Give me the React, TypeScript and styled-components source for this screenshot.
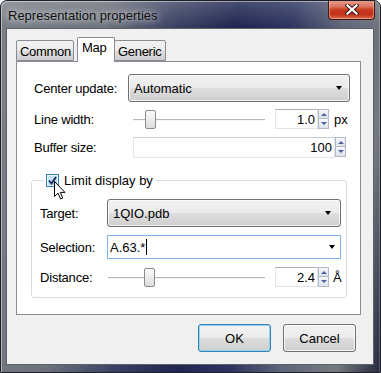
import React from "react";
import styled, { createGlobalStyle } from "styled-components";

const GlobalStyle = createGlobalStyle`
    html, body {
        margin: 0;
        padding: 0;
        background: #ffffff;
    }
    body {
        font-family: "Liberation Sans", Arial, sans-serif;
        font-size: 13px;
        color: #000;
    }
    * {
        box-sizing: border-box;
    }
`;

const Window = styled.div`
    width: 381px;
    height: 373px;
    display: flex;
    flex-direction: column;
    padding: 0 6px 7px 5px;
    border: 1px solid #1d2027;
    border-radius: 7px 7px 0 0;
    overflow: hidden;
    background:
        linear-gradient(180deg, rgba(255, 255, 255, 0.18) 0, rgba(255, 255, 255, 0) 26px),
        linear-gradient(100deg, #7b7f88 0%, #6b707b 25%, #3b4163 40%, #1f2650 54%, #2c345f 66%, #60667a 78%, #75797f 90%, #262b40 100%);
    box-shadow: inset 1px 1px 0 rgba(255, 255, 255, 0.45), inset -1px 0 0 rgba(255, 255, 255, 0.2);
`;

const TitleBar = styled.div`
    height: 27px;
    flex: none;
    display: flex;
    justify-content: space-between;
    align-items: center;
`;

const Title = styled.span`
    padding-left: 2px;
    padding-top: 1px;
    font-size: 13px;
    color: #101010;
    text-shadow: 0 0 6px rgba(255, 255, 255, 0.75), 0 0 10px rgba(255, 255, 255, 0.5);
`;

const CloseButton = styled.div`
    align-self: flex-start;
    width: 47px;
    height: 20px;
    margin-top: -1px;
    margin-right: -1px;
    display: flex;
    align-items: center;
    justify-content: center;
    border: 1px solid #3e1912;
    border-top: none;
    border-radius: 0 0 4px 4px;
    background: linear-gradient(180deg, #e9a393 0%, #d9735d 35%, #c8391f 52%, #c23019 75%, #dd6a4c 100%);
    box-shadow: inset 0 0 0 1px rgba(255, 210, 200, 0.45);
`;

const Client = styled.div`
    flex: 1;
    display: flex;
    flex-direction: column;
    padding: 8px 12px 0 9px;
    background: #f0f0f0;
    border: 1px solid #5c6068;
`;

const TabBar = styled.div`
    height: 25px;
    margin-bottom: -1px;
    display: flex;
    align-items: flex-end;
    position: relative;
    z-index: 1;
`;

const Tab = styled.div<{ $active?: boolean; $w: number }>`
    width: ${p => p.$w}px;
    height: ${p => (p.$active ? 25 : 21)}px;
    margin-bottom: ${p => (p.$active ? 0 : 1)}px;
    margin-left: ${p => (p.$active ? 3 : -1)}px;
    padding: ${p => (p.$active ? "2px 0 0 4px" : "3px 0 0 3px")};
    border: 1px solid #898c95;
    border-bottom: ${p => (p.$active ? "none" : "1px solid #898c95")};
    border-radius: 2px 2px 0 0;
    background: ${p => (p.$active ? "#ffffff" : "linear-gradient(180deg, #f2f2f2 0%, #ebebeb 50%, #dddddd 51%, #cfcfcf 100%)")};
    line-height: 16px;
    letter-spacing: -0.3px;
    white-space: nowrap;

    &:first-child {
        margin-left: 0;
    }
`;

const Pane = styled.div`
    height: 254px;
    padding: 12px 10px 0 17px;
    background: #ffffff;
    border: 1px solid #898c95;
    display: flex;
    flex-direction: column;
`;

const Row = styled.div<{ $h: number; $top?: number; $pr?: number }>`
    height: ${p => p.$h}px;
    margin-top: ${p => p.$top || 0}px;
    padding-right: ${p => p.$pr || 0}px;
    display: flex;
    align-items: center;
    flex: none;
`;

const Label = styled.span<{ $w: number }>`
    width: ${p => p.$w}px;
    flex: none;
    letter-spacing: -0.2px;
`;

const Combo = styled.div<{ $pr?: number }>`
    flex: 1;
    height: 100%;
    display: flex;
    align-items: center;
    justify-content: space-between;
    padding: 0 ${p => p.$pr || 7}px 0 5px;
    border: 1px solid #707070;
    border-radius: 3px;
    background: linear-gradient(180deg, #f2f2f2 0%, #ebebeb 48%, #dddddd 52%, #cfcfcf 100%);
    box-shadow: inset 0 0 0 1px rgba(255, 255, 255, 0.7);
`;

const EditCombo = styled.div`
    flex: 1;
    height: 100%;
    display: flex;
    align-items: center;
    padding: 0 5px 0 2px;
    border: 1px solid #7eb4ea;
    background: #ffffff;
`;

const Caret = styled.span`
    width: 1px;
    height: 16px;
    background: #000;
    margin-left: 1px;
`;

const Arrow = styled.span`
    margin-left: auto;
    width: 0;
    height: 0;
    border-left: 3.5px solid transparent;
    border-right: 3.5px solid transparent;
    border-top: 4px solid #000;
`;

const SliderTrack = styled.div<{ $w: number; $ml?: number }>`
    width: ${p => p.$w}px;
    margin-left: ${p => p.$ml || 0}px;
    height: 100%;
    position: relative;
    flex: none;

    &::before {
        content: "";
        position: absolute;
        left: 0;
        right: 0;
        top: 50%;
        height: 1px;
        background: #b8b8b8;
        box-shadow: 0 1px 0 #f4f4f4;
    }
`;

const Handle = styled.div<{ $pos: number }>`
    position: absolute;
    left: ${p => p.$pos}px;
    top: 50%;
    margin-top: -9px;
    width: 11px;
    height: 19px;
    border: 1px solid #8b8b8b;
    border-radius: 2px;
    background: linear-gradient(180deg, #fafafa 0%, #ececec 50%, #dcdcdc 100%);
`;

const SpinBox = styled.div<{ $w?: number }>`
    ${p => (p.$w ? `width: ${p.$w}px; flex: none;` : "flex: 1;")}
    height: 100%;
    display: flex;
    margin-left: ${p => (p.$w ? 10 : 0)}px;
`;

const SpinField = styled.div<{ $light?: boolean }>`
    flex: 1;
    height: 100%;
    display: flex;
    align-items: center;
    justify-content: flex-end;
    padding-right: 2px;
    background: #fff;
    border: 1px solid ${p => (p.$light ? "#e3e6ec" : "#e2e3ea")};
    border-top-color: ${p => (p.$light ? "#c9ccd3" : "#abadb3")};
`;

const SpinArrows = styled.div`
    width: 11px;
    height: 20px;
    display: flex;
    flex-direction: column;
    flex: none;
`;

const SpinArrowButton = styled.div<{ $down?: boolean }>`
    height: 10px;
    display: flex;
    align-items: center;
    justify-content: center;
    border: 1px solid #b3bac6;
    ${p => (p.$down ? "border-top: none;" : "")}
    background: linear-gradient(180deg, #f5f7fa 0%, #dde3ec 100%);

    &::after {
        content: "";
        width: 0;
        height: 0;
        border-left: 3px solid transparent;
        border-right: 3px solid transparent;
        ${p => (p.$down ? "border-top: 3px solid #4b63a0;" : "border-bottom: 3px solid #4b63a0;")}
    }
`;

const Unit = styled.span<{ $ml: number }>`
    margin-left: ${p => p.$ml}px;
`;

const Group = styled.fieldset`
    margin: 15px 3px 0 -3px;
    padding: 11px 5px 10px 8px;
    border: 1px solid #d5dfe5;
    border-radius: 3px;
    min-width: 0;
`;

const Legend = styled.legend`
    margin-left: 3px;
    padding: 0 3px;
    height: 15px;
    line-height: 15px;
    display: flex;
    align-items: center;
    gap: 5px;
    position: relative;
`;

const CheckBox = styled.div`
    width: 13px;
    height: 13px;
    border: 1px solid #3c7fb1;
    background: linear-gradient(135deg, #cfe8f8 0%, #b9dcf4 60%, #a6d0ee 100%);
    box-shadow: inset 0 0 0 1px #e9f4fc;
    display: flex;
    align-items: center;
    justify-content: center;
`;

const Cursor = styled.svg`
    position: absolute;
    left: 11px;
    top: 8px;
`;

const ButtonRow = styled.div`
    margin-top: 9px;
    padding-right: 5px;
    display: flex;
    justify-content: flex-end;
    gap: 12px;
`;

const DialogButton = styled.div<{ $default?: boolean }>`
    width: 73px;
    height: 28px;
    display: flex;
    align-items: center;
    justify-content: center;
    border: 1px solid ${p => (p.$default ? "#3c7fb1" : "#707070")};
    border-radius: 3px;
    background: linear-gradient(180deg, #f2f2f2 0%, #ebebeb 48%, #dddddd 52%, #cfcfcf 100%);
    box-shadow: inset 0 0 0 1px ${p => (p.$default ? "#8fd3f6" : "rgba(255,255,255,0.75)")};
`;

const Slider = ({ width, pos, ml }: { width: number; pos: number; ml?: number }) => (
    <SliderTrack $w={width} $ml={ml}>
        <Handle $pos={pos} />
    </SliderTrack>
);

const Spin = ({ value, width, light }: { value: string; width?: number; light?: boolean }) => (
    <SpinBox $w={width}>
        <SpinField $light={light}>{value}</SpinField>
        <SpinArrows>
            <SpinArrowButton />
            <SpinArrowButton $down />
        </SpinArrows>
    </SpinBox>
);

export default function App() {
    return (
        <>
            <GlobalStyle />
            <Window>
                <TitleBar>
                    <Title>Representation properties</Title>
                    <CloseButton>
                        <svg width="14" height="11" viewBox="0 0 14 11">
                            <path d="M2.5 1.5 L11.5 9.5 M11.5 1.5 L2.5 9.5" stroke="#3a1a14" strokeWidth="4.2" strokeLinecap="square" />
                            <path d="M2.5 1.5 L11.5 9.5 M11.5 1.5 L2.5 9.5" stroke="#ffffff" strokeWidth="2.2" strokeLinecap="square" />
                        </svg>
                    </CloseButton>
                </TitleBar>
                <Client>
                    <TabBar>
                        <Tab $w={58}>Common</Tab>
                        <Tab $w={38} $active>Map</Tab>
                        <Tab $w={52}>Generic</Tab>
                    </TabBar>
                    <Pane>
                        <Row $h={28}>
                            <Label $w={94}>Center update:</Label>
                            <Combo>
                                Automatic
                                <Arrow />
                            </Combo>
                        </Row>
                        <Row $h={20} $top={7}>
                            <Label $w={99}>Line width:</Label>
                            <Slider width={132} pos={12} />
                            <Spin value="1.0" width={54} />
                            <Unit $ml={5}>px</Unit>
                        </Row>
                        <Row $h={21} $top={8} $pr={4}>
                            <Label $w={99}>Buffer size:</Label>
                            <Spin value="100" light />
                        </Row>
                        <Group>
                            <Legend>
                                <CheckBox>
                                    <svg width="9" height="9" viewBox="0 0 9 9">
                                        <path d="M1 4.5 L3.5 7.5 L8 1" fill="none" stroke="#1a2a5c" strokeWidth="1.8" />
                                    </svg>
                                </CheckBox>
                                <span>Limit display by</span>
                                <Cursor width="12" height="19" viewBox="0 0 12 19">
                                    <path d="M0.5 0.5 L0.5 15.5 L4 12.2 L6.6 18 L8.8 17 L6.3 11.4 L11 11.4 Z" fill="#ffffff" stroke="#000" strokeWidth="1" strokeLinejoin="miter" />
                                </Cursor>
                            </Legend>
                            <Row $h={28}>
                                <Label $w={67}>Target:</Label>
                                <Combo $pr={9}>
                                    1QIO.pdb
                                    <Arrow />
                                </Combo>
                            </Row>
                            <Row $h={24} $top={8}>
                                <Label $w={67}>Selection:</Label>
                                <EditCombo>
                                    A.63.*
                                    <Caret />
                                    <Arrow />
                                </EditCombo>
                            </Row>
                            <Row $h={20} $top={8}>
                                <Label $w={67}>Distance:</Label>
                                <Slider width={157} pos={36} ml={1} />
                                <Spin value="2.4" width={54} />
                                <Unit $ml={4}>Å</Unit>
                            </Row>
                        </Group>
                    </Pane>
                    <ButtonRow>
                        <DialogButton $default>OK</DialogButton>
                        <DialogButton>Cancel</DialogButton>
                    </ButtonRow>
                </Client>
            </Window>
        </>
    );
}
